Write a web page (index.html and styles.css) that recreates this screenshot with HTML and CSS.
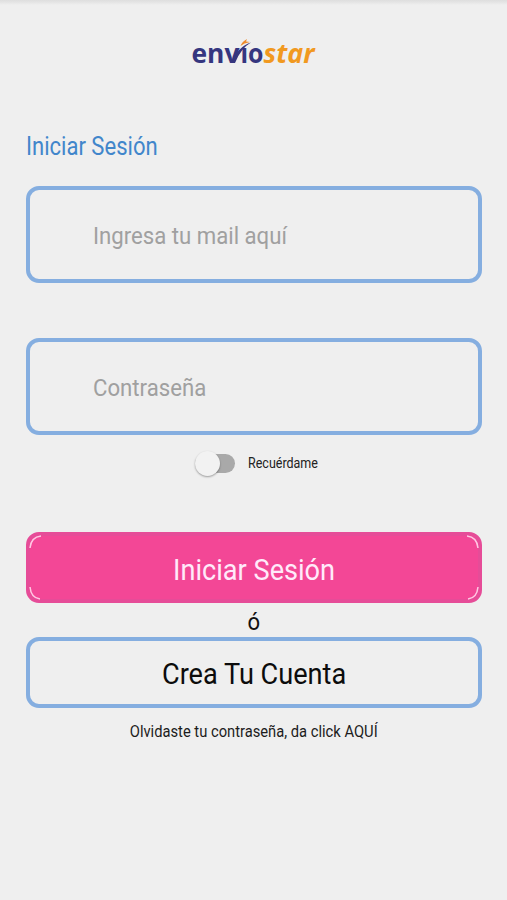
FILE: index.html
```html
<!DOCTYPE html>
<html lang="es">
<head>
<meta charset="utf-8">
<title>Enviostar</title>
<link rel="stylesheet" href="styles.css">
</head>
<body>
<main class="screen">
  <header class="header">
    <svg class="logo" viewBox="0 -6 130 48" role="img" aria-label="enviostar">
      <text class="logo-envio" y="27.200"><tspan x="2.500" textLength="48" lengthAdjust="spacingAndGlyphs">env</tspan><tspan x="51.500" textLength="23" lengthAdjust="spacingAndGlyphs">ıo</tspan></text>
      <text class="logo-star" x="74.500" y="27.200" textLength="51" lengthAdjust="spacingAndGlyphs">star</text>
      <path class="logo-swoosh" d="M43 27Q48 11 62 6.500Q52 12 46 27Z"/>
      <path class="logo-flame" d="M51.500 10Q53 5.500 58 3L57 5.500L61 6Q55 7 51.500 10Z"/>
    </svg>
  </header>
  <h1 class="title"><span class="condensed">Iniciar Sesión</span></h1>
  <div class="field field-mail"><span class="condensed">Ingresa tu mail aquí</span></div>
  <div class="field field-password"><span class="condensed">Contraseña</span></div>
  <div class="remember">
    <span class="switch"><span class="thumb"></span></span>
    <span class="remember-label condensed">Recuérdame</span>
  </div>
  <button class="button primary">
    <svg class="shine" viewBox="0 0 456 71" aria-hidden="true">
      <path d="M4 16Q5 5 15 4M441 4Q451 5 452 16M4 55Q5 66 14 67M442 67Q451 66 452 55"/>
    </svg>
    <span class="condensed">Iniciar Sesión</span>
  </button>
  <div class="or"><span class="condensed">ó</span></div>
  <button class="button secondary"><span class="condensed">Crea Tu Cuenta</span></button>
  <p class="forgot"><span class="condensed">Olvidaste tu contraseña, da click AQUÍ</span></p>
</main>
</body>
</html>
```
FILE: styles.css
```css
* { box-sizing: border-box; }
body {
  margin: 0;
  background: #efefef;
  font-family: Roboto, sans-serif;
}
.screen {
  height: 900px;
  padding: 0 25px 0 26px;
  overflow: hidden;
  background: linear-gradient(#dedede, #e4e4e4 2px, #efefef 5px);
}
.header {
  display: flex;
  justify-content: center;
  padding-top: 30px;
}
.logo { display: block; width: 130px; height: 48px; }
.logo-envio, .logo-star {
  font-family: "Open Sans", sans-serif;
  font-size: 27.5px;
  font-weight: 700;
}
.logo-envio { fill: #35367f; }
.logo-star { fill: #f1991f; font-style: italic; }
.logo-swoosh { fill: #35367f; }
.logo-flame { fill: #ee8b2c; }
.condensed {
  display: inline-block;
  white-space: nowrap;
  transform: scaleX(.92);
  transform-origin: center;
}
.title {
  margin: 53px 0 0;
  height: 31px;
  font-size: 25px;
  line-height: 32px;
  font-weight: 400;
  color: #4186cb;
}
.title .condensed, .field .condensed, .remember-label { transform-origin: left; }
.title .condensed { transform: scaleX(.882); }
.field .condensed { transform: scaleX(.905); }
.field {
  display: flex;
  align-items: center;
  height: 97px;
  padding: 2px 0 0 63px;
  border: 4px solid #85aee0;
  border-radius: 13px;
  font-size: 24.5px;
  color: #a0a0a0;
}
.field-mail { margin-top: 24px; }
.field-password { margin-top: 55px; }
.remember {
  display: flex;
  align-items: center;
  height: 56px;
  padding-left: 169px;
}
.switch {
  display: flex;
  align-items: center;
  width: 40px;
  height: 19px;
  border-radius: 10px;
  background: #a9a9a9;
}
.thumb {
  width: 25px;
  height: 25px;
  flex: none;
  border-radius: 50%;
  background: #f2f2f2;
  box-shadow: 0 1px 2px rgba(0, 0, 0, .35);
}
.remember-label {
  margin-left: 13px;
  font-size: 14px;
  color: #222;
}
.remember .condensed { transform: scaleX(.893); }
.button {
  display: flex;
  align-items: center;
  justify-content: center;
  width: 100%;
  height: 71px;
  padding: 3px 0 0;
  border: 4px solid #85aee0;
  border-radius: 13px;
  background: #efefef;
  color: #0c0c0c;
  font: 400 29.5px Roboto, sans-serif;
}
.primary {
  position: relative;
  margin-top: 41px;
  padding-top: 4px;
  border-color: #e64c98;
  background: #f34796;
  color: #ffeafa;
}
.shine {
  position: absolute;
  top: -4px;
  left: -4px;
  width: 456px;
  height: 71px;
  fill: none;
  stroke: #ffc9e4;
  stroke-width: 1.5;
}
.or {
  height: 34px;
  font-size: 24px;
  line-height: 38px;
  text-align: center;
  color: #111;
}
.forgot {
  margin: 13px 0 0;
  font-size: 16px;
  line-height: 22px;
  text-align: center;
  color: #1c1c1c;
}
```
